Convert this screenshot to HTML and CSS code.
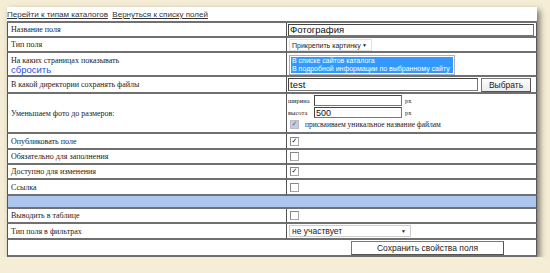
FILE: index.html
```html
<!DOCTYPE html>
<html lang="ru">
<head>
  <meta charset="UTF-8">
  <title>Свойства поля</title>
  <link rel="stylesheet" href="styles.css">
</head>
<body>
  <div class="card">
    <div class="links">
      <a href="#">Перейти к типам каталогов</a>&nbsp; <a href="#">Вернуться к списку полей</a>
    </div>
    <table class="props">
      <tr class="h15">
        <td class="lbl">Название поля</td>
        <td class="val"><input class="txt full" type="text" value="Фотография"></td>
      </tr>
      <tr class="h15">
        <td class="lbl">Тип поля</td>
        <td class="val"><div class="sel sel-type">Прикрепить картинку <span class="arr">&#9660;</span></div></td>
      </tr>
      <tr class="h23">
        <td class="lbl top">На каких страницах показывать<br><a class="reset" href="#">сбросить</a></td>
        <td class="val top">
          <div class="listbox">
            <div class="opt">В списке сайтов каталога</div>
            <div class="opt">В подробной информации по выбранному сайту</div>
          </div>
        </td>
      </tr>
      <tr class="h17">
        <td class="lbl">В какой директории сохранять файлы</td>
        <td class="val">
          <div class="dir">
            <input class="txt dir-input" type="text" value="test">
            <button class="btn pick">Выбрать</button>
          </div>
        </td>
      </tr>
      <tr class="h40">
        <td class="lbl">Уменьшаем фото до размеров:</td>
        <td class="val top">
          <div class="size-line"><span class="small">ширина</span><input class="txt size" type="text" value=""><span class="small">px</span></div>
          <div class="size-line"><span class="small">высота</span><input class="txt size" type="text" value="500"><span class="small">px</span></div>
          <div class="size-line"><span class="cb cb-dis">&#10003;</span><span class="note">присваиваем уникальное название файлам</span></div>
        </td>
      </tr>
      <tr class="h16">
        <td class="lbl">Опубликовать поле</td>
        <td class="val"><span class="cb on">&#10003;</span></td>
      </tr>
      <tr class="h15">
        <td class="lbl">Обязательно для заполнения</td>
        <td class="val"><span class="cb"></span></td>
      </tr>
      <tr class="h15">
        <td class="lbl">Доступно для изменения</td>
        <td class="val"><span class="cb on">&#10003;</span></td>
      </tr>
      <tr class="h16">
        <td class="lbl">Ссылка</td>
        <td class="val"><span class="cb"></span></td>
      </tr>
      <tr class="h13 sep">
        <td colspan="2"></td>
      </tr>
      <tr class="h15">
        <td class="lbl">Выводить в таблице</td>
        <td class="val"><span class="cb"></span></td>
      </tr>
      <tr class="h16">
        <td class="lbl">Тип поля в фильтрах</td>
        <td class="val"><div class="sel sel-filter">не участвует <span class="arr">&#9660;</span></div></td>
      </tr>
      <tr class="h17">
        <td colspan="2" class="foot"><button class="btn save">Сохранить свойства поля</button></td>
      </tr>
    </table>
  </div>
</body>
</html>
```

FILE: styles.css
```css
body {
  margin: 0;
  background: #f5edd6;
  font-family: 'Liberation Serif', serif;
  color: #222;
}
.card {
  width: 530px;
  margin: 7px 0 0 7px;
  background: #fff;
  box-shadow: 3px 3px 6px rgba(0,0,0,0.5);
}
.links {
  height: 14px;
  line-height: 15px;
  font-family: 'Liberation Sans', sans-serif;
  font-size: 8px;
}
.links a {
  color: #333;
}
.props {
  width: 530px;
  border-collapse: separate;
  border-spacing: 0;
  border-top: 2px solid #707070;
  table-layout: fixed;
}
.props td {
  box-sizing: border-box;
  border-bottom: 2px solid #707070;
  padding: 0 2px;
  vertical-align: middle;
  font-size: 8px;
  line-height: 9px;
}
.props td.lbl {
  width: 280px;
  border-left: 1px solid #555;
  border-right: 1px solid #555;
  padding-left: 3px;
}
.props td.val {
  border-right: 1px solid #555;
  padding-left: 1px;
  font-family: 'Liberation Sans', sans-serif;
}
.props td.top {
  vertical-align: top;
}
.h13 { height: 13px; }
.h15 { height: 15px; }
.h16 { height: 16px; }
.h17 { height: 17px; }
.h23 { height: 23px; }
.h40 { height: 40px; }
.sep td {
  background: #adc6ef;
  border-left: 1px solid #555;
  border-right: 1px solid #555;
}
.props td.lbl.top {
  padding-top: 3px;
}
.reset {
  font-family: 'Liberation Sans', sans-serif;
  font-size: 9.5px;
  color: #2b4fd8;
  text-decoration: none;
  line-height: 10px;
}
.txt {
  box-sizing: border-box;
  height: 12px;
  margin: 0;
  padding: 0 1px;
  border: 1px solid #777;
  border-top-color: #444;
  border-left-color: #444;
  font-family: 'Liberation Sans', sans-serif;
  font-size: 9.5px;
  color: #111;
  outline: none;
  display: block;
}
.full {
  width: 100%;
}
.sel {
  position: relative;
  box-sizing: border-box;
  height: 12px;
  line-height: 11px;
  border: 1px solid #e2e2e2;
  background: #fff;
  color: #222;
  margin-left: 1px;
  padding-left: 2px;
}
.sel-type {
  width: 83px;
  font-size: 7px;
}
.sel-filter {
  width: 122px;
  font-size: 8.5px;
  border-color: #ccc;
}
.arr {
  position: absolute;
  right: 4px;
  top: 0;
  font-size: 5px;
}
.listbox {
  width: 166px;
  margin: 2px 0 0 1px;
  border: 1px solid #b0b0b0;
  padding: 1px;
  box-sizing: border-box;
}
.opt {
  background: #3399ff;
  color: #fff;
  font-size: 7px;
  line-height: 8px;
  padding-left: 1px;
}
.dir {
  display: flex;
  align-items: center;
  gap: 3px;
}
.dir-input {
  width: 190px;
  height: 13px;
}
.btn {
  font-family: 'Liberation Sans', sans-serif;
  background: linear-gradient(#fdfdfd, #ececec);
  border: 1px solid #777;
  border-right-color: #555;
  border-bottom-color: #555;
  color: #222;
  padding: 0;
  margin: 0;
  cursor: pointer;
  line-height: 10px;
}
.pick {
  width: 50px;
  height: 14px;
  font-size: 8.5px;
}
.size-line {
  display: flex;
  align-items: center;
  gap: 3px;
  height: 11px;
  margin-top: 1px;
}
.small {
  font-family: 'Liberation Serif', serif;
  font-size: 6.5px;
  width: 23px;
}
.size-line .small:last-child {
  width: auto;
}
.size {
  width: 88px;
  height: 11px;
  font-size: 9px;
}
.note {
  font-family: 'Liberation Serif', serif;
  font-size: 7.5px;
}
.cb {
  display: block;
  box-sizing: border-box;
  width: 9px;
  height: 9px;
  border: 1px solid #a8a8a8;
  border-top-color: #888;
  border-left-color: #888;
  background: #fff;
  margin-left: 2px;
  font-size: 7px;
  line-height: 7px;
  text-align: center;
  color: #111;
  font-family: 'DejaVu Sans', sans-serif;
  overflow: hidden;
}
.cb-dis {
  background: #c8ccd8;
  border-color: #b8bcc8;
  color: #4a5fc0;
  margin-right: 3px;
}
.props td.foot {
  border-left: 1px solid #555;
  border-right: 1px solid #555;
  text-align: right;
  padding-right: 32px;
}
.save {
  width: 153px;
  height: 14px;
  font-size: 8.5px;
  background: #fff;
}
```
